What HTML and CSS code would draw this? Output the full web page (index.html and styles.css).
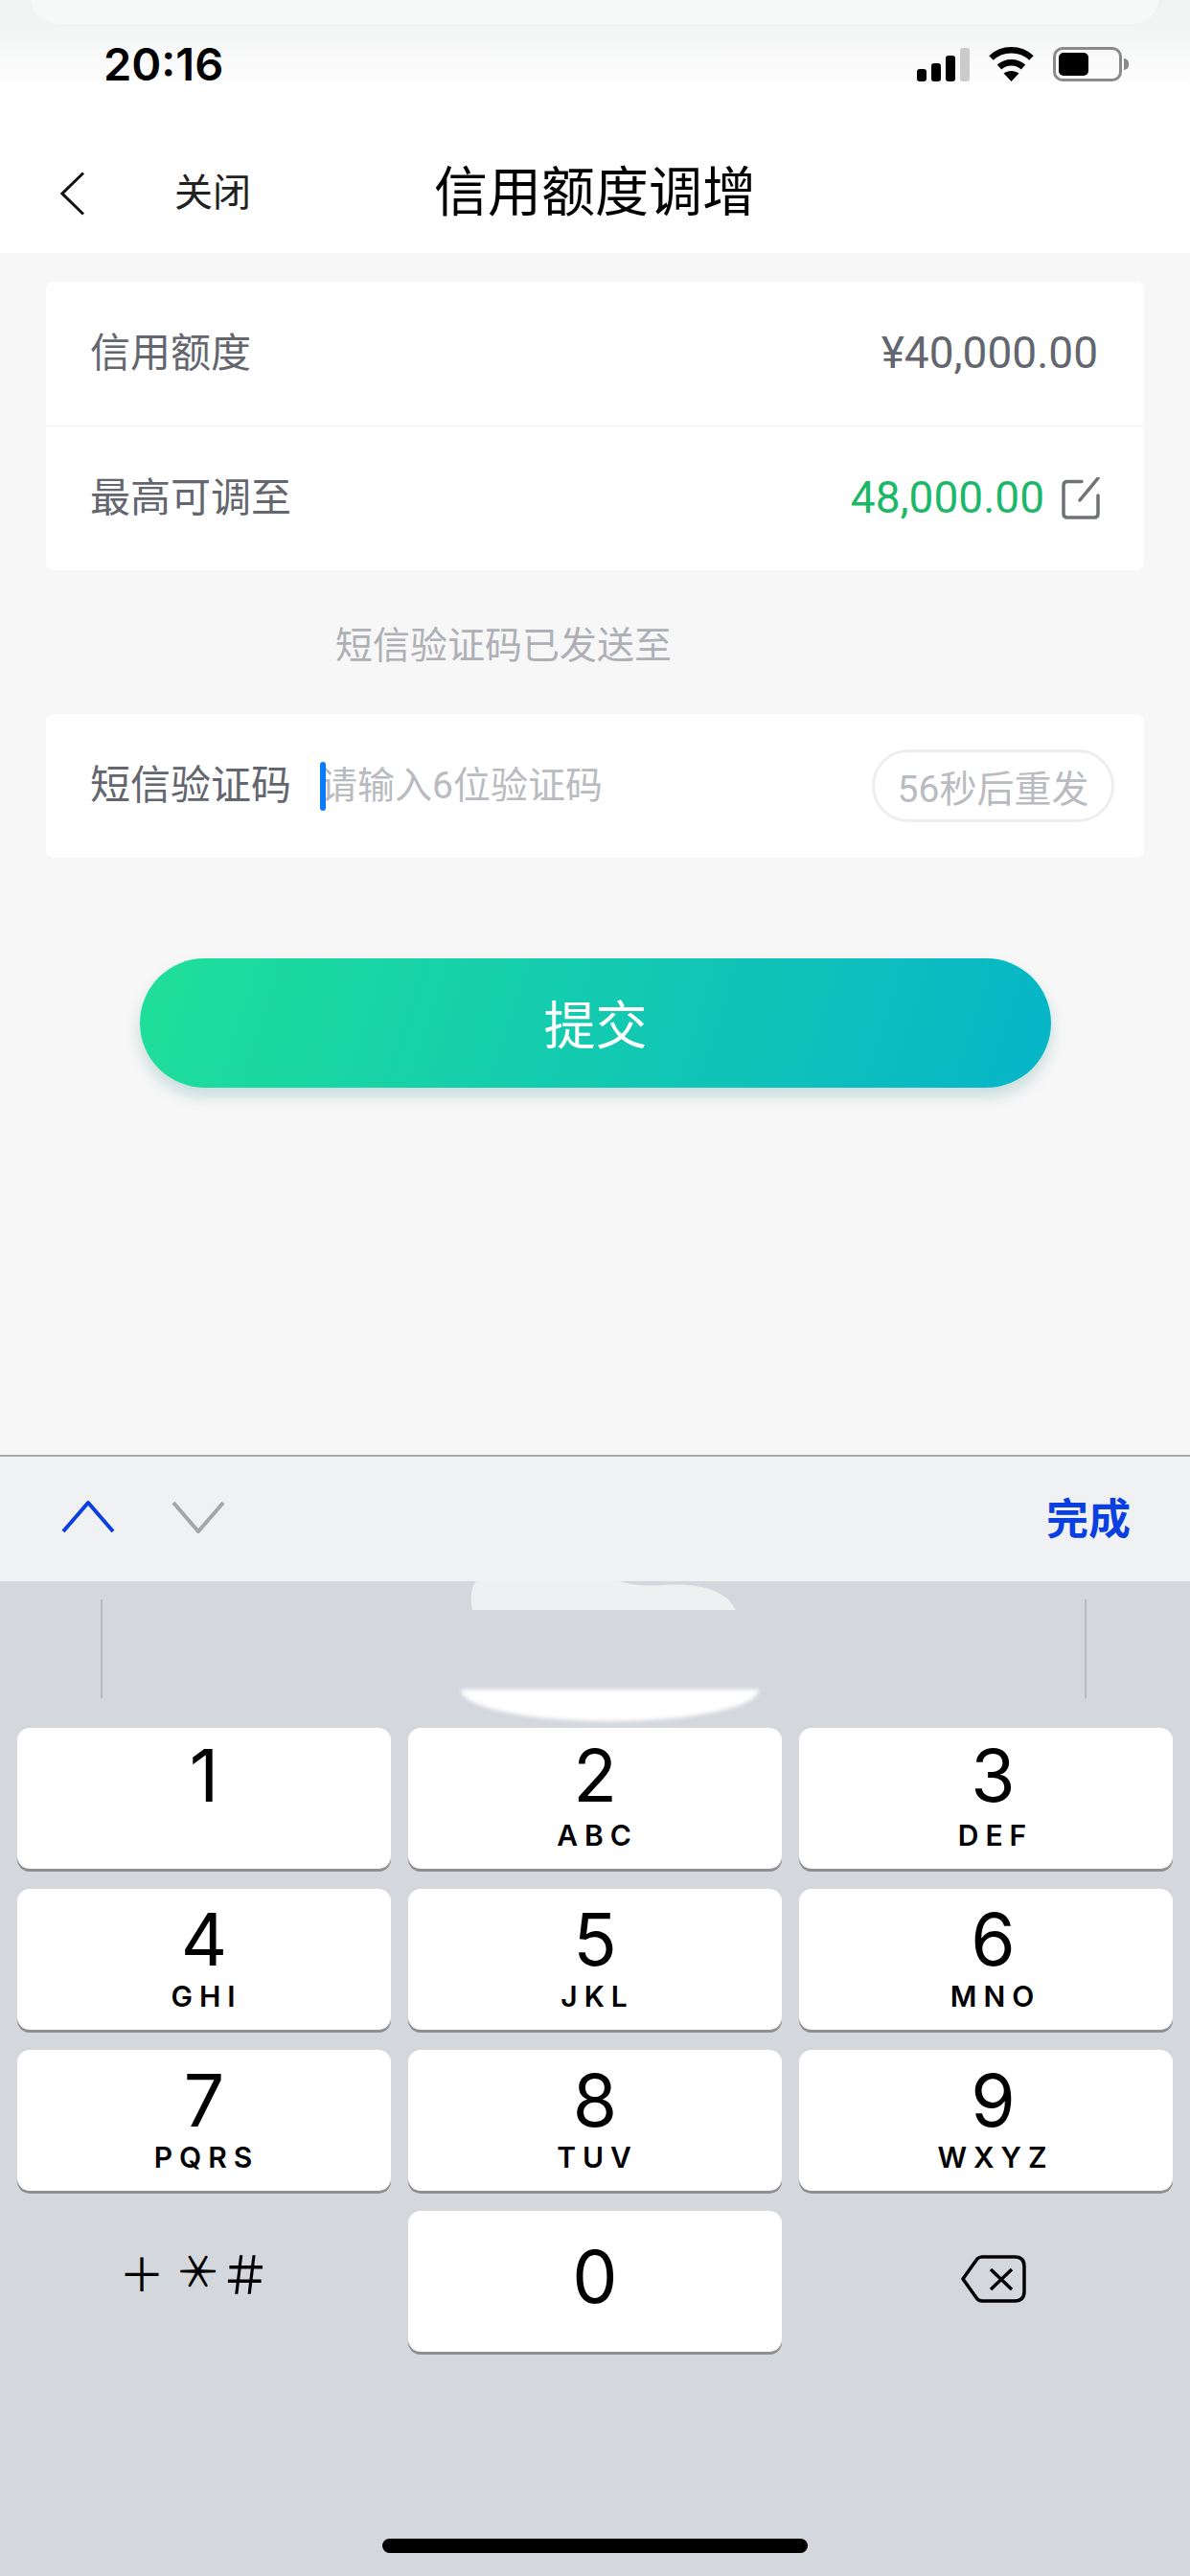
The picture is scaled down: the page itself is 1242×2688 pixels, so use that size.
FILE: index.html
```html
<!DOCTYPE html>
<html lang="zh-CN">
<head>
<meta charset="utf-8">
<title>信用额度调增</title>
<link rel="stylesheet" href="styles.css">
</head>
<body>
<div class="page">
  <header class="status">
    <div class="ghost"></div>
    <span class="time">20:16</span>
    <div class="status-icons">
      <svg class="signal" width="55" height="35" viewBox="0 0 55 35"><rect x="0" y="22" width="10" height="13" rx="3"/><rect x="15" y="16" width="10" height="19" rx="3"/><rect x="30" y="8" width="10" height="27" rx="3"/><rect class="signal-off" x="45" y="0" width="10" height="35" rx="3"/></svg>
      <svg class="wifi" width="47" height="36" viewBox="0 0 47 36"><path class="wifi-arc" d="M2.5 11.5C14 .5 33 .5 44.5 11.5"/><path class="wifi-arc" d="M11 21c7-6.500 18-6.500 25 0"/><path d="M15.500 27.500c4.500-3.500 11.500-3.500 16 0L23.500 36z"/></svg>
      <div class="battery"><div class="battery-body"><div class="battery-level"></div></div><div class="battery-cap"></div></div>
    </div>
  </header>

  <nav class="nav">
    <div class="nav-left">
      <svg class="back" width="25" height="46" viewBox="0 0 25 46"><path d="M24 1.500 2 23l22 21.500"/></svg>
      <span class="close">关闭</span>
    </div>
    <h1 class="title">信用额度调增</h1>
    <div></div>
  </nav>

  <main class="main">
    <section class="card">
      <div class="row row-first">
        <span class="label">信用额度</span>
        <span class="value">¥40,000.00</span>
      </div>
      <div class="row">
        <span class="label">最高可调至</span>
        <span class="value-wrap">
          <span class="value value-green">48,000.00</span>
          <svg class="edit" width="42" height="45" viewBox="0 0 42 45"><path d="M23 4.500H8Q4 4.500 4 8.500V38Q4 42 8 42H36Q40 42 40 38V19"/><path d="M21 24 40 1"/></svg>
        </span>
      </div>
    </section>

    <p class="note">短信验证码已发送至</p>

    <section class="card">
      <div class="row row-code">
        <span class="label">短信验证码</span>
        <span class="caret"></span>
        <span class="placeholder">请输入6位验证码</span>
        <span class="resend">56秒后重发</span>
      </div>
    </section>

    <button class="submit">提交</button>
  </main>

  <div class="toolbar">
    <div class="toolbar-arrows">
      <svg class="arrow arrow-on" width="56" height="34" viewBox="0 0 56 34"><path d="M2 32 28 2l26 30"/></svg>
      <svg class="arrow arrow-off" width="56" height="34" viewBox="0 0 56 34"><path d="M2 2l26 30L54 2"/></svg>
    </div>
    <span class="done">完成</span>
  </div>

  <section class="keyboard">
    <svg class="blob blob-top" width="277" height="30" viewBox="0 0 277 30"><path d="M6 0H155Q175 6 200 4 262 0 277 30H2Q-2 10 6 0Z"/></svg>
    <div class="blob blob-bottom"></div>
    <div class="suggest"><span class="rule"></span><span class="rule"></span></div>
    <div class="keys">
      <div class="key key-top"><span class="digit">1</span></div>
      <div class="key key-top"><span class="digit">2</span><span class="letters">ABC</span></div>
      <div class="key key-top key-right"><span class="digit">3</span><span class="letters">DEF</span></div>
      <div class="key"><span class="digit">4</span><span class="letters">GHI</span></div>
      <div class="key"><span class="digit">5</span><span class="letters">JKL</span></div>
      <div class="key key-right"><span class="digit">6</span><span class="letters">MNO</span></div>
      <div class="key"><span class="digit">7</span><span class="letters">PQRS</span></div>
      <div class="key"><span class="digit">8</span><span class="letters">TUV</span></div>
      <div class="key key-right"><span class="digit">9</span><span class="letters">WXYZ</span></div>
      <div class="key-plain key-symbols"><span class="symbols">＋<span class="star">＊</span><span class="hash">＃</span></span></div>
      <div class="key key-zero"><span class="digit">0</span></div>
      <div class="key-plain key-delete">
        <svg class="delete" width="70" height="52" viewBox="0 0 70 52"><path d="M23 3H57Q67 3 67 13V39Q67 49 57 49H23Q20 49 18 47L3 26 18 5Q20 3 23 3Z"/><path d="M32 16 54 37M54 16 32 37"/></svg>
      </div>
    </div>
    <div class="home-bar"></div>
  </section>
</div>
</body>
</html>
```

FILE: styles.css
```css
* { box-sizing: border-box; }
html, body { margin: 0; padding: 0; }
body {
  width: 1242px;
  height: 2688px;
  overflow: hidden;
  background: #f7f7f7;
  font-family: "Roboto", "Noto Sans CJK SC", sans-serif;
}
.page { display: flex; flex-direction: column; height: 2688px; }

/* status bar */
.status {
  position: relative;
  height: 95px;
  flex: none;
  display: flex;
  justify-content: space-between;
  padding: 49px 64px 0 108px;
  background: linear-gradient(#f1f2f2 0, #f3f4f4 30px, #fcfcfc 75px, #fff 95px);
}
.ghost {
  position: absolute;
  left: 32px;
  right: 32px;
  top: -20px;
  height: 45px;
  border-radius: 0 0 28px 28px;
  background: #f7f8f8;
}
.time { position: relative; font-family: "Inter", sans-serif; font-size: 47px; line-height: 36px; font-weight: 600; color: #000; }
.status-icons { position: relative; display: flex; align-items: flex-end; height: 36px; }
.signal { fill: #000; margin-right: 20px; }
.signal-off { fill: #cbcbcb; }
.wifi { fill: #000; margin-right: 20px; }
.wifi-arc { fill: none; stroke: #000; stroke-width: 6.500; }
.battery { display: flex; align-items: center; height: 36px; }
.battery-body {
  width: 72px;
  height: 36px;
  padding: 3px;
  border: 3px solid #8a8a8a;
  border-radius: 10px;
}
.battery-level { width: 31px; height: 24px; background: #000; border-radius: 5px; }
.battery-cap { width: 5px; height: 12px; margin-left: 2px; background: #8a8a8a; border-radius: 0 5px 5px 0; }

/* nav */
.nav {
  height: 169px;
  flex: none;
  display: grid;
  grid-template-columns: 1fr auto 1fr;
  align-items: center;
  background: #fff;
  padding-top: 44px;
}
.nav-left { display: flex; align-items: center; padding-left: 63px; }
.back { fill: none; stroke: #111; stroke-width: 3; }
.close { margin-left: 94px; font-size: 40px; line-height: 1; color: #222; }
.title { margin: 0; font-size: 56px; line-height: 1.2; font-weight: 400; color: #000; }

/* content */
.main { flex: 1; padding: 30px 48px 0; display: flex; flex-direction: column; }
.card { background: #fff; border-radius: 8px; }
.row {
  height: 150px;
  display: flex;
  align-items: center;
  justify-content: space-between;
  padding: 0 48px 0 46px;
}
.row-first { height: 151px; border-bottom: 1px solid #eeeff0; }
.label { font-size: 42px; line-height: 1.2; color: #63666e; white-space: nowrap; }
.value { font-size: 46px; line-height: 1.2; color: #63666e; }
.value-wrap { display: flex; align-items: center; }
.value-green { color: #1db76a; margin-right: 16px; }
.edit { fill: none; stroke: #6f7276; stroke-width: 3.500; stroke-linecap: round; margin-right: -2px; }
.note {
  height: 150px;
  margin: 0;
  padding-left: 302px;
  display: flex;
  align-items: center;
  font-size: 39px;
  color: #aeb0b6;
}
.row-code { justify-content: flex-start; padding-right: 31px; }
.caret { position: relative; z-index: 1; width: 6px; height: 51px; margin-left: 30px; border-radius: 3px; background: #0a7aff; }
.placeholder { flex: 1; margin-left: -6px; font-size: 39px; line-height: 1.2; color: #b9bbc0; white-space: nowrap; }
.resend {
  width: 253px;
  height: 76px;
  display: flex;
  align-items: center;
  justify-content: center;
  border: 3px solid #eeeeef;
  border-radius: 38px;
  font-size: 39px;
  color: #b9bbc0;
  white-space: nowrap;
}
.submit {
  display: block;
  width: 951px;
  height: 135px;
  margin: 105px 0 0 98px;
  padding: 0 0 2px;
  border: 0;
  border-radius: 68px;
  background: linear-gradient(108deg, #20df99 0%, #06b5c8 100%);
  box-shadow: 0 9px 16px rgba(10, 110, 110, .2);
  font: inherit;
  font-size: 54px;
  color: #fff;
}

/* keyboard accessory */
.toolbar {
  height: 132px;
  flex: none;
  display: flex;
  align-items: center;
  justify-content: space-between;
  padding: 0 62px 0 64px;
  background: #f0f1f3;
  border-top: 2px solid #a9a9a9;
}
.toolbar-arrows { display: flex; gap: 59px; padding-bottom: 4px; }
.arrow { fill: none; stroke-width: 4; }
.arrow-on { stroke: #0a3fe0; }
.arrow-off { stroke: #a5a6a8; }
.done { padding-top: 2px; font-size: 44px; line-height: 1.2; font-weight: 700; color: #0a3fe0; }

/* keyboard */
.keyboard {
  position: relative;
  height: 1038px;
  flex: none;
  background: #d4d7dc;
}
.blob { position: absolute; }
.blob-top { left: 491px; top: 0; fill: #eff0f2; }
.blob-bottom {
  left: 481px;
  top: 113px;
  width: 311px;
  height: 33px;
  background: #fff;
  border-radius: 0 0 50% 50% / 0 0 100% 100%;
  filter: blur(2px);
}
.suggest { height: 153px; padding: 19px 108px 0 105px; display: flex; justify-content: space-between; }
.rule { width: 2px; height: 103px; background: #b9babd; }
.keys {
  display: grid;
  grid-template-columns: repeat(3, 390px);
  grid-auto-rows: 147px;
  gap: 21px 18px;
  padding: 0 18px;
  font-family: "Inter", sans-serif;
}
.key {
  display: flex;
  flex-direction: column;
  align-items: center;
  padding-top: 16px;
  background: #fff;
  border-radius: 13px;
  box-shadow: 0 3px 0 #8d8e92;
  color: #000;
}
.key-top { padding-top: 13px; }
.key-top .letters { margin-top: 11px; }
.key-right { padding-left: 15px; }
.key-zero { padding-top: 32px; }
.digit { font-size: 75px; line-height: 74px; font-weight: 375; }
.letters { margin-top: 8px; font-size: 30px; line-height: 29px; font-weight: 600; letter-spacing: 7px; margin-right: -5px; }
.key-plain { display: flex; align-items: center; justify-content: center; }
.key-symbols { padding: 0 22px 22px 0; }
.symbols { font-family: "Noto Sans CJK SC", sans-serif; font-size: 48px; line-height: 1; letter-spacing: 6px; color: #000; }
.star { display: inline-block; transform: translateX(8px) rotate(90deg); margin-right: 6px; letter-spacing: 0; }
.hash { display: inline-block; letter-spacing: 0; transform: scale(1.12); }
.key-delete { padding: 0 0 6px 16px; }
.delete { fill: none; stroke: #000; stroke-width: 3.500; stroke-linejoin: round; }
.home-bar {
  position: absolute;
  left: 399px;
  bottom: 24px;
  width: 444px;
  height: 15px;
  border-radius: 8px;
  background: #000;
}
```
